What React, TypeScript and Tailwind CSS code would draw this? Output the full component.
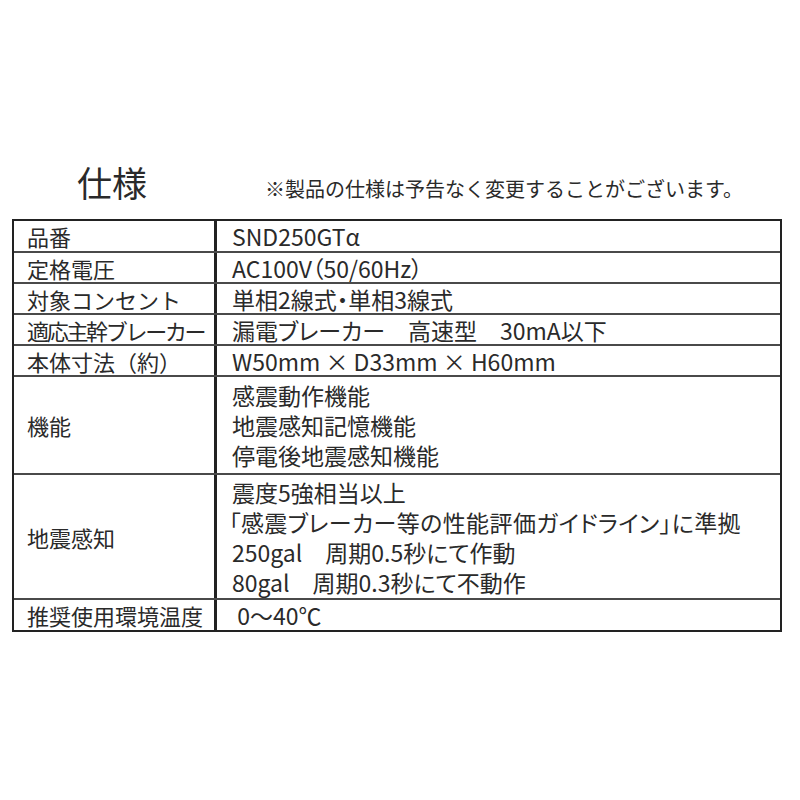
import React from "react";

const jp = { fontFamily: '"Noto Sans CJK JP", "Noto Sans", sans-serif' };

type Row = { label: string; lines: string[]; h: string; labelCls?: string; lineCls?: string[]; last?: boolean; lh?: string };

const rows: Row[] = [
  { label: "品番", lines: ["SND250GTα"], h: "h-[32px]" },
  { label: "定格電圧", lines: ["AC100V（50/60Hz）"], h: "h-[31px]" },
  { label: "対象コンセント", lines: ["単相2線式・単相3線式"], h: "h-[31px]" },
  { label: "適応主幹ブレーカー", lines: ["漏電ブレーカー　高速型　30mA以下"], h: "h-[31px]", labelCls: "tracking-[-2.3px]" },
  { label: "本体寸法（約）", lines: ["W50mm × D33mm × H60mm"], h: "h-[31px]" },
  { label: "機能", lines: ["感震動作機能", "地震感知記憶機能", "停電後地震感知機能"], h: "h-[98px]", lh: "leading-[30px]" },
  {
    label: "地震感知",
    lines: ["震度5強相当以上", "「感震ブレーカー等の性能評価ガイドライン」に準拠", "250gal　周期0.5秒にて作動", "80gal　周期0.3秒にて不動作"],
    h: "h-[125px]",
    lh: "leading-[30px]",
    lineCls: ["", "-ml-[3px] tracking-[0.4px]", "", ""],
  },
  { label: "推奨使用環境温度", lines: [" 0～40℃"], h: "h-[30px]", last: true },
];

export default function App() {
  return (
    <div className="w-[800px] h-[800px] bg-white text-[#2a2a2a]" style={jp}>
      <div className="pt-[160px] flex items-end">
        <div className="ml-[77px] text-[35px] leading-[44px] font-normal">仕様</div>
        <div className="ml-[118px] mb-[1px] text-[20px] leading-[28px] font-normal whitespace-nowrap">
          ※製品の仕様は予告なく変更することがございます。
        </div>
      </div>
      <div className="mt-[15px] ml-[12px] w-[770px] border-2 border-[#222]">
        {rows.map((r, i) => (
          <div key={i} className={`flex ${r.h} ${r.last ? "" : "border-b-2 border-[#4a4a4a]"}`}>
            <div className="w-[203px] shrink-0 border-r-[3px] border-[#222] flex items-center pl-[13px]">
              <span className={`text-[22px] leading-[28px] font-normal whitespace-nowrap ${r.labelCls ?? ""}`}>{r.label}</span>
            </div>
            <div className="flex-1 flex flex-col justify-center pl-[15px] [font-feature-settings:'palt']">
              {r.lines.map((l, j) => (
                <div
                  key={j}
                  className={`text-[23px] ${r.lh ?? "leading-[28px]"} font-normal whitespace-pre ${r.lineCls?.[j] ?? ""}`}
                >
                  {l}
                </div>
              ))}
            </div>
          </div>
        ))}
      </div>
    </div>
  );
}
